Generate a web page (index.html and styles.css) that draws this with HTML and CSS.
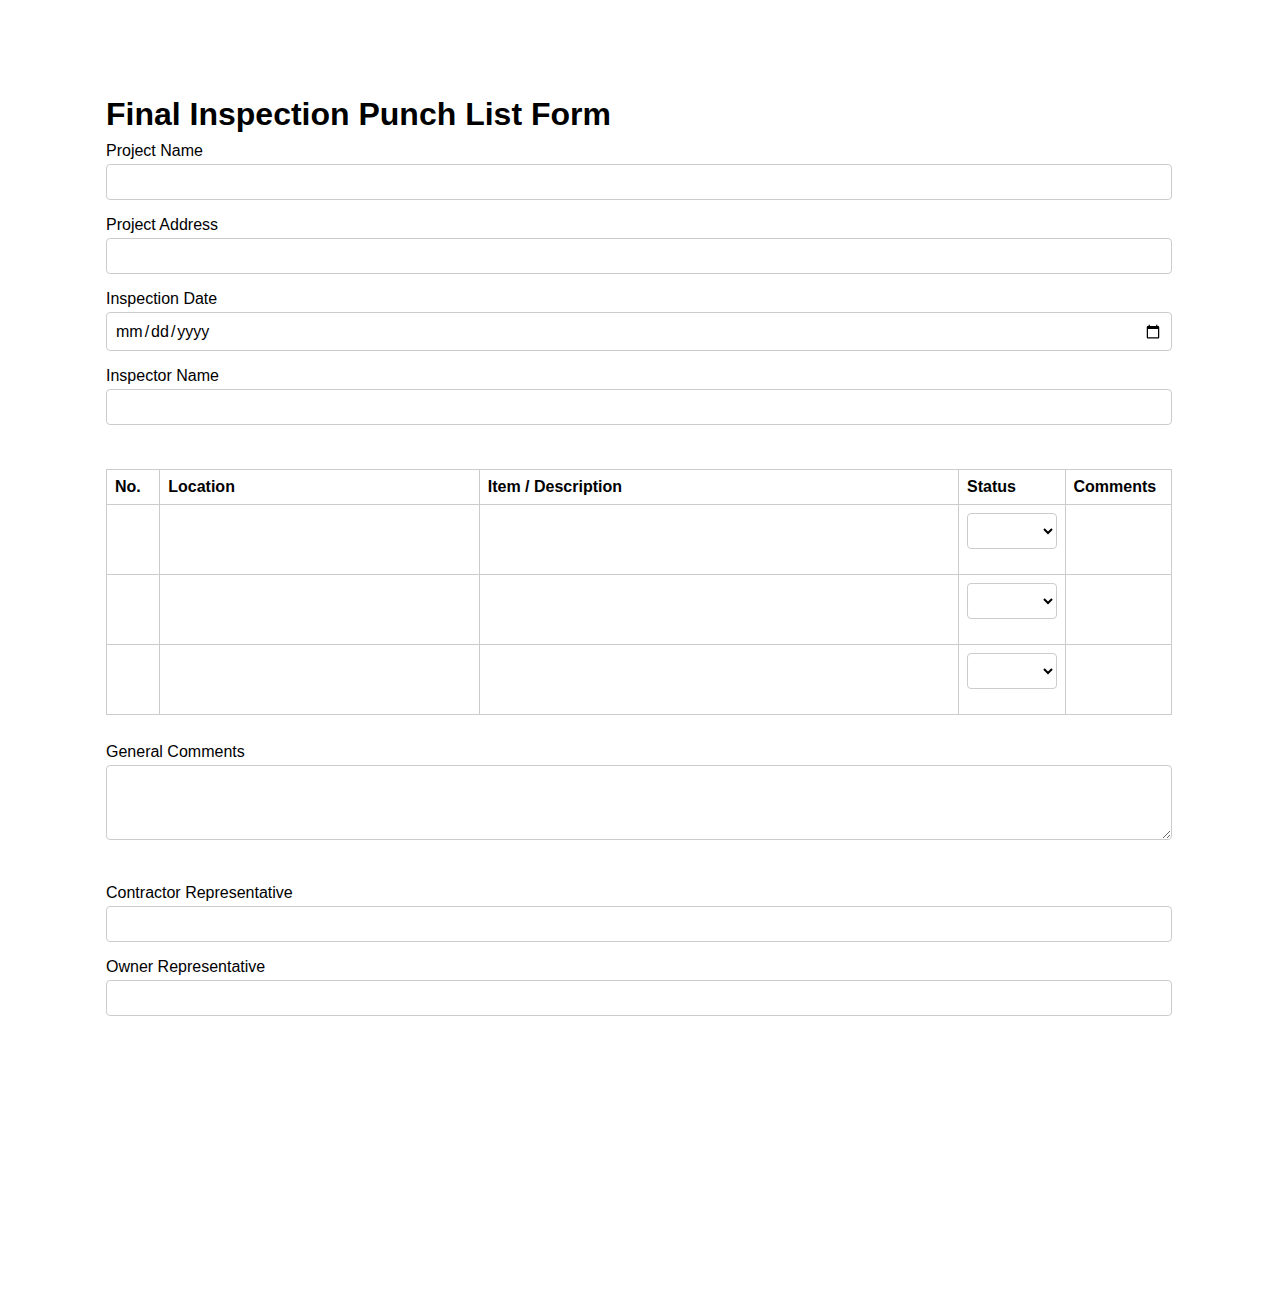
FILE: index.html
```html
<!DOCTYPE html>
<html lang="en">
<head>
<meta charset="utf-8">
<title>Final Inspection Punch List Form</title>
<link rel="stylesheet" href="styles.css">
</head>
<body>
<main class="page">
  <h1 class="title">Final Inspection Punch List Form</h1>
  <form class="form">
    <div class="field">
      <label class="label" for="project-name">Project Name</label>
      <input class="control" type="text" id="project-name">
    </div>
    <div class="field">
      <label class="label" for="project-address">Project Address</label>
      <input class="control" type="text" id="project-address">
    </div>
    <div class="field">
      <label class="label" for="inspection-date">Inspection Date</label>
      <input class="control date" type="date" id="inspection-date">
    </div>
    <div class="field">
      <label class="label" for="inspector-name">Inspector Name</label>
      <input class="control" type="text" id="inspector-name">
    </div>

    <table class="punch">
      <colgroup>
        <col class="c-no"><col class="c-loc"><col class="c-item"><col class="c-status"><col class="c-comments">
      </colgroup>
      <thead>
        <tr><th>No.</th><th>Location</th><th>Item / Description</th><th>Status</th><th>Comments</th></tr>
      </thead>
      <tbody>
        <tr><td></td><td></td><td></td><td><select class="status"><option></option><option>Open</option><option>Closed</option></select></td><td></td></tr>
        <tr><td></td><td></td><td></td><td><select class="status"><option></option><option>Open</option><option>Closed</option></select></td><td></td></tr>
        <tr><td></td><td></td><td></td><td><select class="status"><option></option><option>Open</option><option>Closed</option></select></td><td></td></tr>
      </tbody>
    </table>

    <div class="field">
      <label class="label" for="general-comments">General Comments</label>
      <textarea class="control area" id="general-comments"></textarea>
    </div>

    <div class="signatures">
      <div class="field">
        <label class="label" for="contractor-rep">Contractor Representative</label>
        <input class="control" type="text" id="contractor-rep">
      </div>
      <div class="field">
        <label class="label" for="owner-rep">Owner Representative</label>
        <input class="control" type="text" id="owner-rep">
      </div>
    </div>
  </form>
</main>
</body>
</html>
```
FILE: styles.css
```css
html, body {
  margin: 0;
  padding: 0;
  background: #fff;
}
body {
  font-family: "Liberation Sans", Arial, sans-serif;
  font-size: 16px;
  color: #000;
}
.page {
  max-width: 1066px;
  margin: 0 auto;
  padding-top: 96px;
}
.title {
  font-size: 32px;
  font-weight: bold;
  margin: 0 0 9px;
}
.field {
  margin-bottom: 16px;
}
.label {
  display: block;
  margin-bottom: 4px;
}
.control {
  display: block;
  width: 100%;
  box-sizing: border-box;
  padding: 8px;
  font-family: "Liberation Sans", Arial, sans-serif;
  font-size: 16px;
  border: 1px solid #ccc;
  border-radius: 4px;
  background: #fff;
  color: #000;
  margin: 0;
}
.date {
  height: 39px;
}
.date::-webkit-datetime-edit-text {
  padding: 0 1px;
}
.area {
  height: 75px;
  resize: vertical;
}
.punch {
  width: 100%;
  border-collapse: collapse;
  margin: 44px 0 28px;
  table-layout: fixed;
}
.c-no { width: 5%; }
.c-loc { width: 30%; }
.c-item { width: 45%; }
.c-status { width: 10%; }
.c-comments { width: 10%; }
.punch th, .punch td {
  border: 1px solid #ccc;
  padding: 8px;
  text-align: left;
  vertical-align: top;
}
.punch th {
  font-weight: bold;
}
.punch td {
  height: 53px;
  box-sizing: content-box;
}
.status {
  display: block;
  width: 100%;
  height: 36px;
  box-sizing: border-box;
  padding: 8px;
  font-family: "Liberation Sans", Arial, sans-serif;
  font-size: 16px;
  border: 1px solid #ccc;
  border-radius: 4px;
  background: #fff;
  margin: 0;
}
.signatures {
  margin-top: 44px;
}
```
